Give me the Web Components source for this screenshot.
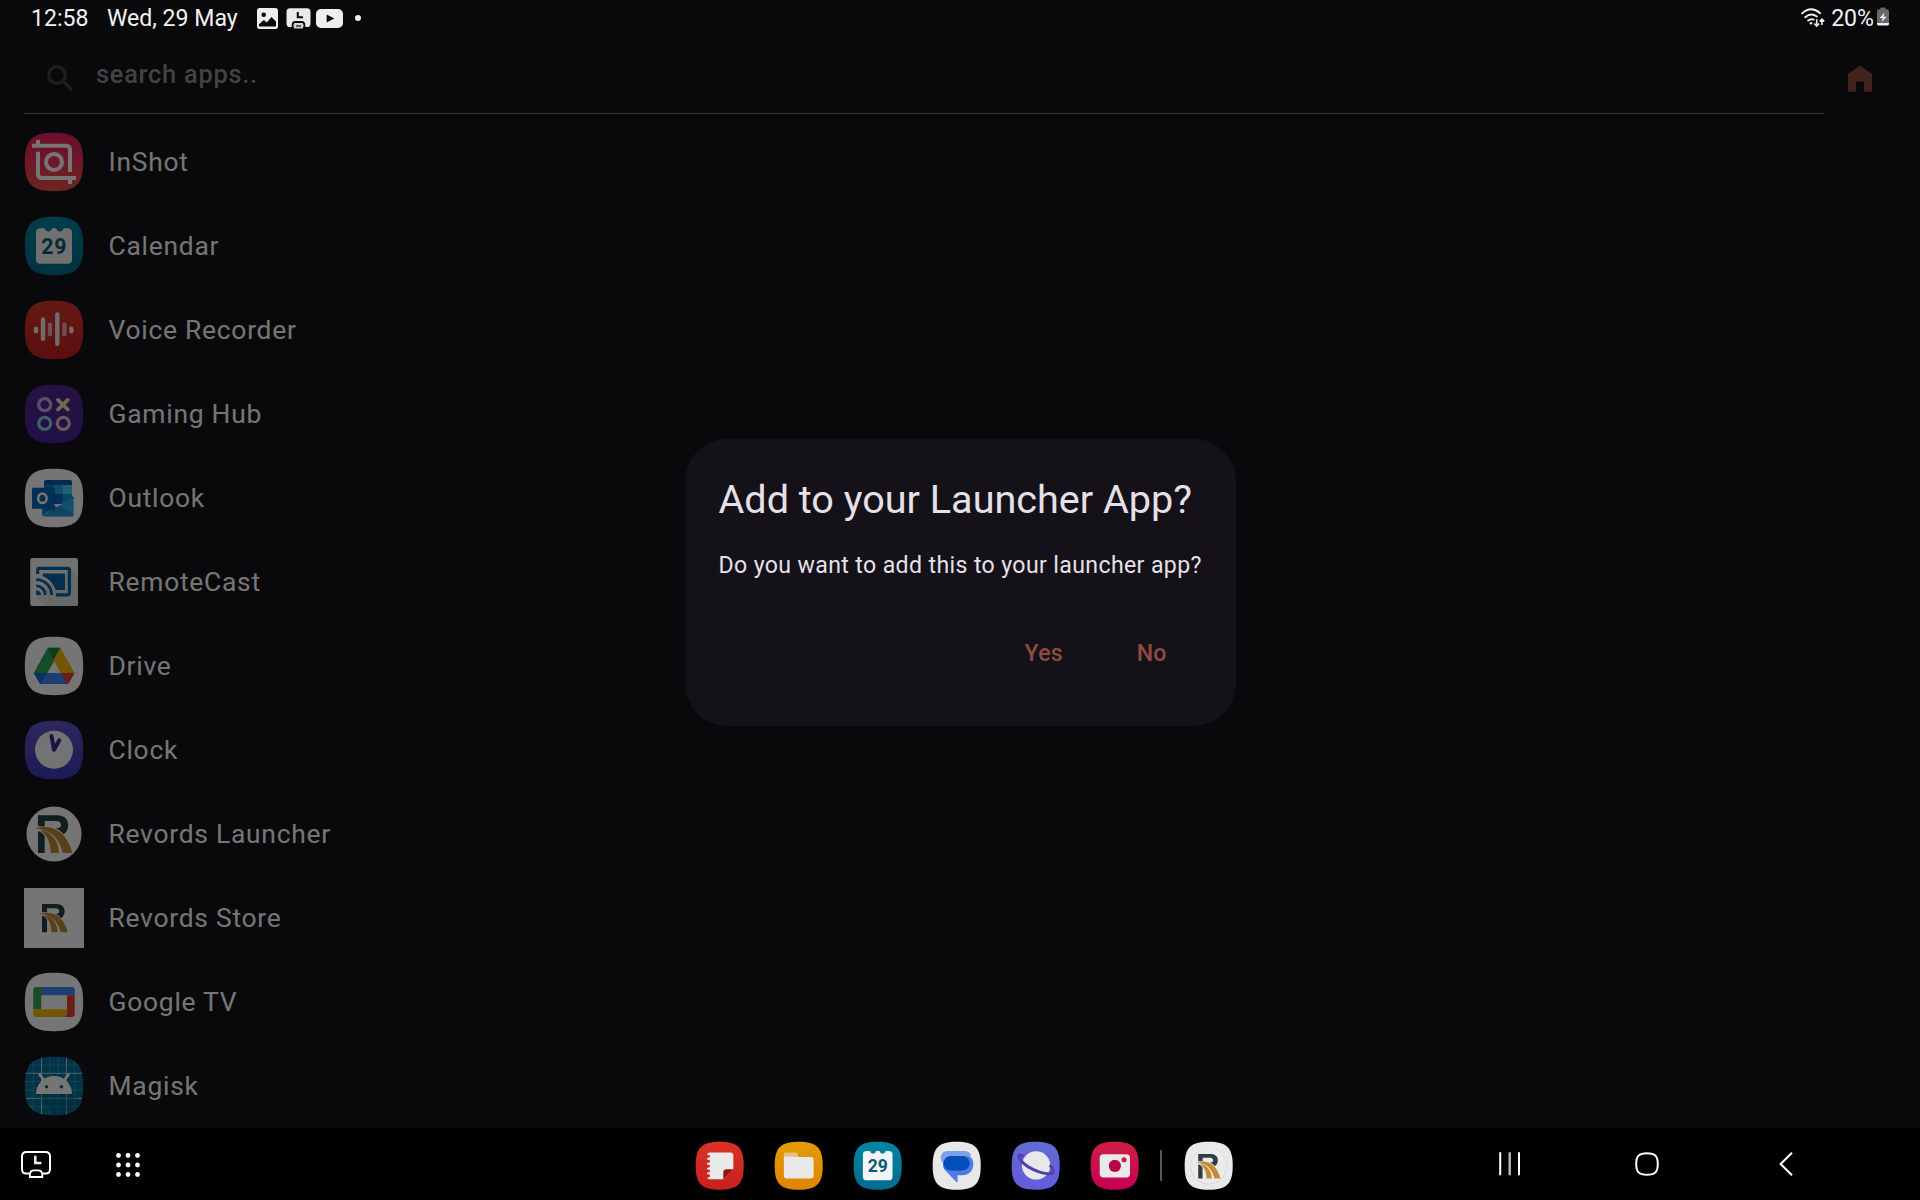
<!DOCTYPE html>
<html lang="en">
<head>
<meta charset="utf-8">
<title>Launcher</title>
<style>
html,body{margin:0;height:100%;background:#000;overflow:hidden}
body{font-family:Roboto,"Noto Sans",sans-serif}
</style>
</head>
<body>
<tablet-screen></tablet-screen>
<script>
const SQ='M30 .8C52 .8 59.2 8 59.2 30S52 59.2 30 59.2 .8 52 .8 30 8 .8 30 .8Z';
let gid=0;
const bg=(a,b)=>{const g='g'+(++gid);return `<defs><linearGradient id="${g}" x1="0" y1="0" x2="0" y2="1"><stop stop-color="${a}"/><stop offset="1" stop-color="${b}"/></linearGradient></defs><path d="${SQ}" fill="url(#${g})"/>`;};
const R=`<path fill="#293f47" d="M14 11.3H33C40 11.3 44.2 15 44.2 20.8C44.2 25.2 42.6 28.4 39.6 30.2C37.6 27.6 35 25.6 31.6 24.2C34.8 24.4 37 23.6 37 21.2C37 18.3 35.2 17 32 17H20.7V22.4L14 22ZM14 27C17 27.8 19 29.4 20.7 32V48.9H14Z"/>
<path fill="#c48a35" d="M10.8 24.2C25 20.6 34.5 25.4 40 32C44 36.8 46.6 42.6 48.3 48.9H38.7C36.2 37 29 26 10.8 24.2Z"/>
<path fill="#c48a35" d="M15.6 26C27 27.4 34.4 36 35 48.9H26.8C26.6 38.5 22.6 29.6 15.6 26Z"/>`;
const ICONS={
inshot:()=>bg('#ef1c62','#ed5145')+`<g fill="none" stroke="#fff" stroke-width="4" stroke-linejoin="round"><path d="M8 13.8H42Q46 13.8 46 18V40M14 19.8V42Q14 46 18 46H52"/><path d="M14 8V14M46 46V52"/><circle cx="30" cy="30" r="8"/></g>`,
calendar:()=>bg('#0086a3','#006c8e')+`<path fill="#f3f4f5" d="M16.5 12.2H20.6C21.3 14.4 22.6 15.5 24.3 15.5S27.3 14.4 28 12.2H32.2C32.9 14.4 34.2 15.5 35.9 15.5S38.9 14.4 39.6 12.2H43.5Q48 12.2 48 16.7V43.3Q48 47.8 43.5 47.8H16.5Q12 47.8 12 43.3V16.7Q12 12.2 16.5 12.2Z"/><text x="30.2" y="37.9" text-anchor="middle" font-family="Roboto,sans-serif" font-weight="700" font-size="21.3" fill="#0b5a78">29</text>`,
voice:()=>bg('#d8392c','#c9201f')+`<g stroke="#f6ecec" stroke-width="4.4" stroke-linecap="round"><path d="M12 28.8V31.2M19 19.4V38.8M33.3 14.5V43.8M47.4 28.8V31.2"/><path stroke="#f1aaa6" d="M26 24.8V34.2M40.4 24.8V34.2"/></g>`,
gaming:()=>bg('#55278f','#45279b')+`<g fill="none" stroke-width="3.3"><circle cx="20.7" cy="20.7" r="6" stroke="#bfaeee"/><path d="M34 15.9L43.8 25.5M43.8 15.9L34 25.5" stroke="#eee6ae" stroke-width="3.8" stroke-linecap="round"/><circle cx="20.7" cy="39.4" r="6" stroke="#91cde0"/><circle cx="39.3" cy="39.4" r="6" stroke="#e7bdc5"/></g>`,
outlook:()=>`<path d="${SQ}" fill="#fff"/><path fill="#0a5bb5" d="M22 12H46Q48 12 48 14V34H20V14Q20 12 22 12Z"/><path fill="#147ad0" d="M20 17H29.3V26H20Z"/><path fill="#28a8ea" d="M29.3 17H38.7V26H29.3Z"/><path fill="#50d0f4" d="M38.7 17H48V26H38.7Z"/><path fill="#0f67bd" d="M29.3 26H38.7V36H29.3Z"/><path fill="#1a9ade" d="M38.7 26H48V31L38.7 36Z"/><path fill="#0f3f80" d="M48.3 28.3L50 29.5L48.3 31Z"/><path fill="#1689d0" d="M18 31L49.7 48.3H20Q18 48.3 18 46.3Z"/><path fill="#2bb4ea" d="M49.7 29.6V46.5Q49.7 48.3 47.7 48.3H21L18.5 47Z"/><path fill="#1d97d8" d="M21 48.3L35 37.5L49.5 47Q49 48.3 47.7 48.3Z"/><path fill="#064c96" opacity=".55" d="M20 20H31V42.5H20Z"/><rect x="8" y="19.7" width="21" height="21" rx="1.3" fill="#0868bd"/><ellipse cx="18.4" cy="30.2" rx="4.2" ry="4.8" fill="none" stroke="#fff" stroke-width="2.5"/>`,
cast:()=>`<rect x="6.2" y="6" width="47.8" height="48" rx="2" fill="#f6f6f6"/><path d="M47 17L54 24V52Q54 54 52 54H20L12 44Z" fill="#e3e4e5"/><g fill="none" stroke="#0a64a8" stroke-width="3.2"><path d="M13.7 22V18Q13.7 16.3 15.4 16.3H43.7Q45.4 16.3 45.4 18V41Q45.4 42.8 43.7 42.8H32"/><path d="M12.2 33.9A9.1 9.1 0 0 1 21.3 43M12.2 27.6A15.4 15.4 0 0 1 27.6 43" stroke-width="2.8"/></g><path fill="#0a64a8" d="M18.7 21.4H41V37.9H31.7C29.5 31.5 25 26.5 18.7 24.2ZM12.2 38.2A4.8 4.8 0 0 1 17 43H12.2Z"/>`,
drive:()=>`<path d="${SQ}" fill="#fff"/><path fill="#34a853" d="M23.7 11.7L9.7 37H23.3L36 14.5V11.7Z"/><path fill="#188038" d="M23.7 11.7H36.3L29.7 23.8Z"/><path fill="#fbbc04" d="M36.3 11.7L50.7 36.9H36.8L29.6 24Z"/><path fill="#4285f4" d="M9.7 36.9H44L44.3 48H16Z"/><path fill="#1967d2" d="M9.7 36.9H23.3L16.6 48Z"/><path fill="#ea4335" d="M36.8 36.9H50.7L44.3 48H43.2Z"/>`,
clock:()=>bg('#6257c9','#3f3bbd')+`<circle cx="30" cy="29.7" r="19" fill="#fafafa"/><path fill="none" stroke="#3a2d96" stroke-width="4" stroke-linecap="round" stroke-linejoin="round" d="M27.5 16L30 29.7L35.2 20.4"/>`,
revords:()=>`<circle cx="30" cy="30" r="27.6" fill="#fff"/>${R}`,
store:()=>`<rect width="60" height="60" fill="#fff"/><g transform="translate(7.5 7.5) scale(.75)">${R}</g>`,
gtv:()=>`<path d="${SQ}" fill="#fff"/><path fill="#4285f4" d="M17 15H47.7Q50.7 15 50.7 18V23.2H17Z"/><path fill="#34a853" d="M12.3 15H19.5Q17.2 16 17.2 18.5V37.2H9.3V18Q9.3 15 12.3 15Z"/><path fill="#fbbc04" d="M9.3 37.2H43V42Q43 45 40 45H12.3Q9.3 45 9.3 42Z"/><path fill="#ea4335" d="M43 23.2H50.7V42Q50.7 45 47.7 45H40Q43 44.6 43 41Z"/>`,
magisk:()=>`<clipPath id="mc"><path d="${SQ}"/></clipPath><path d="${SQ}" fill="#007199"/><g clip-path="url(#mc)" stroke="#75b7cb" stroke-width=".9" fill="none"><path opacity=".5" d="M9.3 0V60M25.7 0V60M34 0V60M50.7 0V60M0 9H60M0 25.4H60M0 34H60M0 50.7H60"/><path stroke="#c1e2ea" d="M17.5 0V60M42.4 0V60M0 17.3H60M0 42.3H60"/></g><path fill="#005777" opacity=".35" d="M12 38H48L56 46L51 55L30 59L24 50Z"/><path fill="#fff" d="M12 37.9A18 18 0 0 1 48 37.9Z"/><path stroke="#fff" stroke-width="2.8" stroke-linecap="round" d="M15.8 18.6L20.6 25M44.4 18.6L39.6 25"/><circle cx="22.6" cy="30.7" r="1.7" fill="#006080"/><circle cx="37.4" cy="30.7" r="1.7" fill="#006080"/>`,
notes:()=>bg('#da3426','#c61f20')+`<path fill="#e9e9e9" d="M18 14H43Q46.6 14 46.6 17.6V34.4L34.4 46.6H18Q15 46.6 15 44.5Q18.4 44 18.4 42.3T14.6 40.2V38.6Q18.4 38.2 18.4 36.4T14.6 34.4V32.8Q18.4 32.3 18.4 30.5T14.6 28.5V26.8Q18.4 26.4 18.4 24.6T14.6 22.5V20.8Q18.4 20.4 18.4 18.6T14.8 17Q15 14 18 14Z"/><path fill="#8f1417" d="M34.4 46.6V38.4Q34.4 34.4 38.4 34.4H46.6Z"/>`,
folder:()=>bg('#e19d04','#e08400')+`<path fill="#e9c27e" d="M14.5 14H26.5Q29 14 29 16.5V24H12V16.5Q12 14 14.5 14Z"/><path fill="#e9e9e9" d="M12 19H28Q30 19 31.2 19.3H44.5Q48.2 19.3 48.2 23V42Q48.2 45.7 44.5 45.7H15.7Q12 45.7 12 42Z"/>`,
messages:()=>`<path d="${SQ}" fill="#e8e8e8"/><path fill="#4b7bea" d="M23 18H41C47 18 50.2 22 50.2 27.8C50.2 36 44.5 41.5 37 41.5H31V48.5Q31 51 29 49.3L14.5 34C12 29 14 18 23 18Z"/><path fill="#7ea0e8" d="M18.7 12.2H39.5C44 12.2 47.2 15.2 47.5 18.5H22C17 18.5 14 22 13.6 27Q10.6 24.4 10.6 20.3C10.6 15.5 14.3 12.2 18.7 12.2Z"/><rect x="13.8" y="18.3" width="32" height="17.4" rx="8.7" fill="#034fba"/>`,
internet:()=>bg('#606bd2','#665bdc')+`<circle cx="30.5" cy="29.7" r="17.2" fill="#e8e8ea"/><path fill="none" stroke="#5440ac" stroke-width="3.6" d="M15.5 18.8C9 15.5 8.5 18.5 11.3 22.7C14.7 27.8 23 33.6 34 37.4C45 41 52 40.5 51.3 36C51 33.8 49.5 31.5 47 29.4"/>`,
camera:()=>bg('#cf1f45','#c40055')+`<rect x="11.8" y="16.1" width="36.8" height="28.3" rx="4.5" fill="#e9e9e9"/><circle cx="30.2" cy="30.2" r="7.4" fill="#b9004c"/><circle cx="41.4" cy="22.8" r="3.1" fill="#c91e49"/>`,
revordsDock:()=>`<path d="${SQ}" fill="#e9e9e9"/><circle cx="30" cy="30.6" r="21.6" fill="none" stroke="#cfcfcf" stroke-width="1"/><circle cx="30" cy="30" r="21.4" fill="#ebebeb"/><g transform="translate(6.2 6.8) scale(.79)">${R}</g>`
};
const SYS={
search:[28,28,`<circle cx="11" cy="11" r="8.4" fill="none" stroke="#4d413d" stroke-width="3.2"/><path d="M17.3 17.3L26 26" stroke="#4d413d" stroke-width="3.6"/>`],
home:[24,27,`<path fill="#8f4b41" d="M12 .4L24 9V26.8H16V16.5H8V26.8H0V9Z"/>`],
picture:[21,21,`<path fill="#eee" fill-rule="evenodd" d="M2.8 0H18.2Q21 0 21 2.8V18.2Q21 21 18.2 21H2.8Q0 21 0 18.2V2.8Q0 0 2.8 0ZM2 16.3V18.6H19V13.5L14.6 9L9.7 14.6L6.9 12Z"/><circle cx="6.7" cy="6.7" r="2.3" fill="#09090b"/>`],
schedule:[25,21,`<rect x=".5" y=".3" width="24" height="18.7" rx="3.6" fill="#e9e9e9"/><path d="M11.8 4V9.3H17" fill="none" stroke="#09090b" stroke-width="2"/><path d="M6.6 19V17.2Q6.6 14 9.5 14H15.5Q18.4 14 18.4 17.2V19" fill="none" stroke="#09090b" stroke-width="1.8"/><path d="M8 20.4V17.5Q8 15.2 10 15.2H15Q17 15.2 17 17.5V20.4Z" fill="#ccc"/><path d="M10 18H15" stroke="#333" stroke-width="1.4"/>`],
video:[27,19,`<rect width="27" height="19" rx="5" fill="#eee"/><path fill="#09090b" d="M10.7 5.4L18.3 9.5L10.7 13.6Z"/>`],
wifi:[24,20,`<g fill="none" stroke="#eee" stroke-width="1.9" stroke-linecap="round"><path d="M1.2 5.4Q10 -2.6 19.2 5.2M4.2 9.2Q10.2 4 15.8 8.6M7.2 12.6Q10 10.4 12.6 11.6"/></g><circle cx="10" cy="15.2" r="1.3" fill="#eee"/><path fill="none" stroke="#eee" stroke-width="1.6" d="M15.7 11.2V17.8M13.3 15.6L15.7 18L18.1 15.6M21 17V11.6M18.8 13.4L21 11.1L23.2 13.4"/>`],
battery:[12,20,`<path fill="#69696b" d="M4 .6H8Q8.8 .6 8.8 2.2H9.6Q12 2.2 12 4.6V16H0V4.6Q0 2.2 2.4 2.2H3.2Q3.2 .6 4 .6Z"/><path fill="#f2f2f2" d="M0 16H12V16.7Q12 18.6 10 18.6H2Q0 18.6 0 16.7ZM7.6 5.6L2.6 11H5.7L4.6 15L9.6 9.8H6.4Z"/>`],
taskClock:[30,28,`<path fill="none" stroke="#fff" stroke-width="2" d="M8.5 22.6H5Q1 22.6 1 18V5.5Q1 1 5.5 1H24.5Q29 1 29 5.5V18Q29 22.6 25 22.6H21.5"/><path fill="none" stroke="#eee" stroke-width="2.5" stroke-linecap="round" d="M14.3 5.8V12H19.4"/><path fill="none" stroke="#fff" stroke-width="1.8" d="M8.9 26V23.8Q8.9 19.3 13 19.3H17Q21.3 19.3 21.3 23.8V26Z"/>`],
grid:[24,24,[2.5,12,21.5].map(y=>[2.5,12,21.5].map(x=>`<circle cx="${x}" cy="${y}" r="2.4" fill="#fff"/>`).join('')).join('')],
recents:[22,24,`<path stroke="#fff" stroke-width="2" d="M1.2 .3V23.3M20 .3V23.3"/><path stroke="#bbb" stroke-width="2.4" d="M10.7 .3V23.3"/>`],
homeKey:[24,24,`<path fill="none" stroke="#fff" stroke-width="2" d="M12 1.2C20 1.2 22.8 4 22.8 12S20 22.8 12 22.8 1.2 20 1.2 12 4 1.2 12 1.2Z"/>`],
back:[14,24,`<path fill="none" stroke="#fff" stroke-width="2" d="M13 .7L1.6 12L13 23.3"/>`]
};
function el(name,render){
  customElements.define(name,class extends HTMLElement{
    constructor(){super();this.attachShadow({mode:'open'});}
    connectedCallback(){this.shadowRoot.innerHTML=render(this);}
  });
}
el('app-icon',h=>`<style>:host{display:block;flex:none;width:var(--icon,60px);height:var(--icon,60px)}svg{display:block;width:100%;height:100%}</style><svg viewBox="0 0 60 60">${ICONS[h.getAttribute('name')]()}</svg>`);
el('sys-icon',h=>{const [w,t,s]=SYS[h.getAttribute('name')];return `<style>:host{display:block;flex:none}svg{display:block}</style><svg width="${w}" height="${t}" viewBox="0 0 ${w} ${t}">${s}</svg>`;});
el('app-row',h=>`<style>:host{display:flex;align-items:center;height:84px;padding-left:24px;gap:24.5px;color:#fff;font-size:26.4px;letter-spacing:.75px;line-height:36px;white-space:nowrap}span{padding-bottom:1px}</style><app-icon name="${h.getAttribute('icon')}"></app-icon><span><slot></slot></span>`);
el('status-bar',()=>`<style>:host{display:flex;align-items:flex-start;height:37px;padding:0 31px 0 31px;box-sizing:border-box;color:#f2f2f2;font-size:23.1px;line-height:38px;white-space:nowrap}
.date{margin-left:18.4px}.p{margin:8px 0 0 19.6px}.s{margin:8px 0 0 8px}.v{margin:9px 0 0 5px}.dot{width:6px;height:6px;border-radius:50%;background:#eee;margin:15px 0 0 12px}.w{margin:8px 6px 0 auto}.b{margin:7px 0 0 3px}</style>
<span>12:58</span><span class="date">Wed, 29 May</span><sys-icon class="p" name="picture"></sys-icon><sys-icon class="s" name="schedule"></sys-icon><sys-icon class="v" name="video"></sys-icon><i class="dot"></i>
<sys-icon class="w" name="wifi"></sys-icon><span class="pct">20%</span><sys-icon class="b" name="battery"></sys-icon>`);
el('search-bar',()=>`<style>:host{display:flex;height:83px;padding:0 48px 0 24px;box-sizing:border-box;justify-content:space-between}
.field{width:1800px;height:77px;box-sizing:border-box;border-bottom:1.5px solid #857a78;display:flex;padding-left:21.5px;gap:22.5px;color:#919191;font-size:25.4px;font-weight:500;letter-spacing:.75px;line-height:36px}
.field sys-icon{margin-top:26.5px}.field span{margin-top:19px}.home{margin-top:27.5px}</style>
<div class="field"><sys-icon name="search"></sys-icon><span>search apps..</span></div><sys-icon class="home" name="home"></sys-icon>`);
el('confirm-dialog',()=>`<style>:host{display:block;box-sizing:border-box;width:551px;height:287px;border-radius:42px;background:#141218;padding:35.5px 34px;color:#e6e0e9}
h1{margin:0;font-weight:400;font-size:39.6px;line-height:52px;white-space:nowrap}
p{margin:23px 0 0;font-size:23.1px;line-height:34px;letter-spacing:.37px;white-space:nowrap}
nav{display:flex;justify-content:flex-end;gap:74px;margin:55px 35px 0 0}
button{all:unset;color:#904a42;font-size:23.1px;font-weight:500;letter-spacing:.15px;line-height:32px}</style>
<h1><slot name="title"></slot></h1><p><slot></slot></p><nav><button>Yes</button><button>No</button></nav>`);
el('nav-bar',()=>`<style>:host{display:grid;grid-template-columns:1fr auto 1fr;align-items:start;height:72px;background:#000;--icon:49.4px}
div{display:flex}.l{padding:23px 0 0 21px;gap:65px}.l sys-icon+sys-icon{margin-top:2px}
.c{padding:12.6px 0 0 8.5px;gap:29.5px}.sep{width:2px;height:31px;background:#58585a;margin:9px -8px 0 -8px}
.r{justify-content:flex-end;padding:24px 127px 0 0}.h{margin-left:114.5px}.b{margin-left:120px}</style>
<div class="l"><sys-icon name="taskClock"></sys-icon><sys-icon name="grid"></sys-icon></div>
<div class="c">${['notes','folder','calendar','messages','internet','camera'].map(n=>`<app-icon name="${n}"></app-icon>`).join('')}<i class="sep"></i><app-icon name="revordsDock"></app-icon></div>
<div class="r"><sys-icon name="recents"></sys-icon><sys-icon class="h" name="homeKey"></sys-icon><sys-icon class="b" name="back"></sys-icon></div>`);
el('tablet-screen',()=>`<style>:host{display:flex;flex-direction:column;width:1920px;height:1200px;position:relative;background:#141318;overflow:hidden}
main{flex:1;display:flex;flex-direction:column;padding-top:37px}
.scrim{position:absolute;left:0;top:0;width:1920px;height:1128px;background:rgba(0,0,0,.54);display:flex;flex-direction:column}
.scrim section{flex:1;display:flex;align-items:center;justify-content:center;padding-bottom:.5px}nav-bar{flex:none}</style>
<main><search-bar></search-bar>
${[['inshot','InShot'],['calendar','Calendar'],['voice','Voice Recorder'],['gaming','Gaming Hub'],['outlook','Outlook'],['cast','RemoteCast'],['drive','Drive'],['clock','Clock'],['revords','Revords Launcher'],['store','Revords Store'],['gtv','Google TV'],['magisk','Magisk']].map(([i,t])=>`<app-row icon="${i}">${t}</app-row>`).join('')}</main>
<div class="scrim"><status-bar></status-bar><section><confirm-dialog><span slot="title">Add to your Launcher App?</span>Do you want to add this to your launcher app?</confirm-dialog></section></div>
<nav-bar></nav-bar>`);
</script>
</body>
</html>
